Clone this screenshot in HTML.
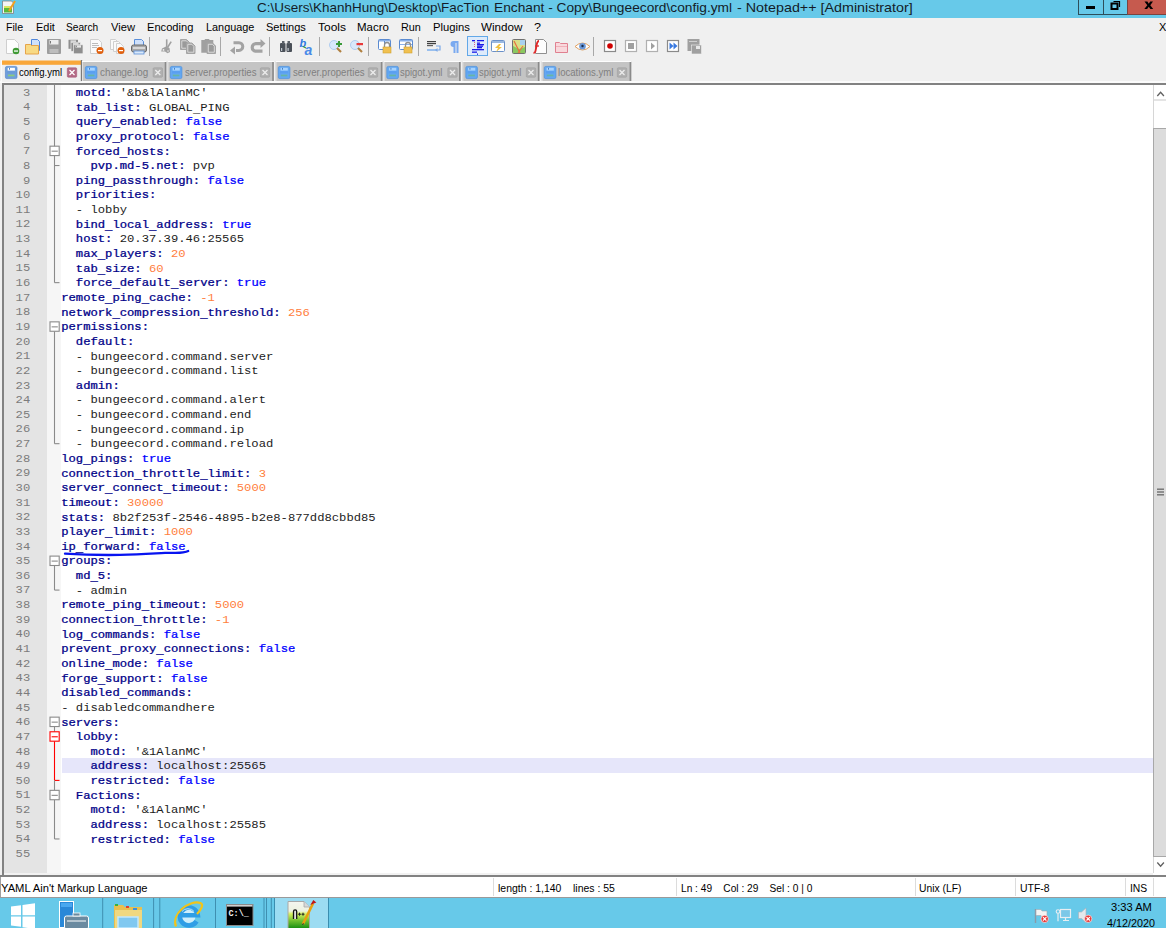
<!DOCTYPE html>
<html><head><meta charset="utf-8"><style>
*{margin:0;padding:0;box-sizing:border-box}
html,body{width:1166px;height:928px;overflow:hidden;background:#f0f0f0;position:relative;font-family:"Liberation Sans",sans-serif}
.a{position:absolute}
.mono{font-family:"Liberation Mono",monospace;font-size:12.2px;line-height:14.64px;white-space:pre;color:#1c1c1c;transform:scaleY(0.82);transform-origin:0 10px}
.k{color:#000088;-webkit-text-stroke:0.3px #000088}
.b{color:#0000ff;-webkit-text-stroke:0.3px #0000ff}
.n{color:#ff8040}
.u{position:relative;top:2.4px}
.ln{color:#7c7c7c;text-align:right;width:40px;transform:scaleY(0.93)!important}
.ui{font-family:"Liberation Sans",sans-serif;white-space:pre}
svg{position:absolute;left:0;top:0}
</style></head>
<body>
<div class="a" style="left:0;top:0;width:1166px;height:17.5px;background:#67c9e9"></div><div class="a" style="left:0;top:81px;width:1166px;height:2px;background:#fbfbfb"></div><div class="a" style="left:2px;top:83px;width:1164px;height:794px;background:#fff;border-top:2px solid #828282;border-left:2px solid #828282;border-bottom:2px solid #828282"></div><div class="a" style="left:4px;top:85px;width:43px;height:788px;background:#e4e4e4"></div><div class="a" style="left:47px;top:85px;width:14px;height:788px;background:#f6f6f6"></div><div class="a" style="left:4px;top:873px;width:1149px;height:2px;background:#f2f2f2"></div><div class="a" style="left:0;top:875px;width:3px;height:2px;background:#828282"></div><div class="a" style="left:61.5px;top:758.24px;width:1092px;height:14.4px;background:#e6e6fa"></div><div class="a" style="left:1153px;top:85px;width:13px;height:788px;background:#fff;border-left:1px solid #d6d6d6"></div><div class="a" style="left:1154px;top:99px;width:12px;height:1.5px;background:#e4e4e4"></div><div class="a" style="left:1153px;top:128.3px;width:13px;height:728.7px;background:#dcdcdc;border-left:1px solid #a8a8a8;border-top:1px solid #a8a8a8;border-bottom:1px solid #a8a8a8"></div><div class="a" style="left:0;top:876.5px;width:1166px;height:20.5px;background:#fff;border-left:1px solid #a0a0a0"></div><div class="a" style="left:492.5px;top:878px;width:1px;height:18px;background:#dcdcdc"></div><div class="a" style="left:676.3px;top:878px;width:1px;height:18px;background:#dcdcdc"></div><div class="a" style="left:915.0px;top:878px;width:1px;height:18px;background:#dcdcdc"></div><div class="a" style="left:1015.3px;top:878px;width:1px;height:18px;background:#dcdcdc"></div><div class="a" style="left:1125.1px;top:878px;width:1px;height:18px;background:#dcdcdc"></div><div class="a" style="left:1153.3px;top:878px;width:1px;height:18px;background:#dcdcdc"></div><div class="a" style="left:0;top:896.5px;width:1166px;height:1px;background:#9a9a9a"></div><div class="a" style="left:0;top:897.5px;width:1166px;height:31px;background:#67c9e9"></div><div class="a" style="left:274px;top:897.5px;width:55px;height:31px;background:#9cdcf2;border-left:1px solid #3a8eb0;border-right:1px solid #3a8eb0"></div>
<svg width="1166" height="928" viewBox="0 0 1166 928"><rect x="1078.5" y="-1" width="25" height="15.5" fill="#67c9e9" stroke="#2e4e5a" stroke-width="1"/><rect x="1103.5" y="-1" width="24" height="15.5" fill="#67c9e9" stroke="#2e4e5a" stroke-width="1"/><rect x="1127.5" y="-1" width="40" height="15.5" fill="#c65a4e" stroke="#7a4440" stroke-width="1"/><rect x="1086" y="6" width="9" height="3" fill="#000"/><rect x="1111.5" y="3.5" width="6" height="5.5" fill="none" stroke="#000" stroke-width="2"/><path d="M1113.5,1.5 h6 v5.5" fill="none" stroke="#000" stroke-width="1.2"/><path d="M1144.5,1.5 H1147.4 L1148.8,3.7 L1150.2,1.5 H1153 L1150.3,5.2 L1153.2,9.1 H1150.4 L1148.8,6.7 L1147.1,9.1 H1144.3 L1147.3,5.2 Z" fill="#000"/><path d="M2.5,1 h9 l2,2 v10.5 h-11 z" fill="#f4f4f4" stroke="#808080" stroke-width=".8"/><rect x="4" y="7" width="8" height="5.5" fill="#5cb83a"/><rect x="4" y="6" width="8" height="2" fill="#d8e860"/><path d="M9,11 l6,-10" stroke="#f0a020" stroke-width="2"/><line x1="149.5" y1="37" x2="149.5" y2="56" stroke="#a8a8a8" stroke-width="1"/><line x1="220.5" y1="37" x2="220.5" y2="56" stroke="#a8a8a8" stroke-width="1"/><line x1="269.5" y1="37" x2="269.5" y2="56" stroke="#a8a8a8" stroke-width="1"/><line x1="319.5" y1="37" x2="319.5" y2="56" stroke="#a8a8a8" stroke-width="1"/><line x1="368.5" y1="37" x2="368.5" y2="56" stroke="#a8a8a8" stroke-width="1"/><line x1="418.5" y1="37" x2="418.5" y2="56" stroke="#a8a8a8" stroke-width="1"/><line x1="593.5" y1="37" x2="593.5" y2="56" stroke="#a8a8a8" stroke-width="1"/><path d="M6.5,39.5 h8 l4,4 v10 h-12 z" fill="#fdfdfd" stroke="#cfcfcf"/><circle cx="16" cy="51" r="3.3" fill="#3f9a34"/><rect x="14" y="50.4" width="4" height="1.3" fill="#fff"/><path d="M31.5,39.5 h6 l2,2 v9 h-8 z" fill="#cfe1fb" stroke="#4f86da"/><path d="M25.5,44.5 h5 l1,1 h7 v8.5 h-13 z" fill="#f8da84" stroke="#e6a44a"/><rect x="47" y="39" width="14" height="15" rx="1" fill="#9d9d9d"/><rect x="49.5" y="40" width="9" height="4.5" fill="#ececec"/><rect x="50" y="41" width="1" height="2.5" fill="#777"/><rect x="49.5" y="49" width="9" height="4" fill="#bdbdbd"/><rect x="68.5" y="39.8" width="9.5" height="9" fill="#8e8e8e"/><rect x="70.5" y="40.3" width="5.5" height="2" fill="#d8d8d8"/><rect x="71" y="42.3" width="9.5" height="9" fill="#8e8e8e" stroke="#eeeeee" stroke-width=".7"/><rect x="73" y="42.8" width="5.5" height="2" fill="#d8d8d8"/><rect x="73.5" y="44.8" width="9.5" height="9" fill="#8e8e8e" stroke="#eeeeee" stroke-width=".7"/><rect x="75.5" y="45.3" width="5.5" height="2.3" fill="#e8e8e8"/><rect x="76" y="45.6" width=".8" height="1.6" fill="#777"/><path d="M90.5,39.5 h8 l3,3 v11 h-11 z" fill="#fafafa" stroke="#cfcfcf"/><rect x="92" y="43" width="6" height="1" fill="#bbb"/><rect x="92" y="45" width="7" height="1" fill="#bbb"/><rect x="92" y="47" width="5" height="1" fill="#bbb"/><circle cx="100" cy="50.5" r="3.5" fill="#e0600e"/><rect x="98" y="50" width="4" height="1.2" fill="#fff"/><path d="M110.5,39.5 h5 l2,2 v8 h-7 z" fill="#fafafa" stroke="#cfcfcf"/><path d="M113.5,41.5 h5 l2,2 v8 h-7 z" fill="#fafafa" stroke="#cfcfcf"/><path d="M116.5,43.5 h4 l3,3 v7 h-7 z" fill="#fafafa" stroke="#cfcfcf"/><circle cx="121" cy="50.5" r="3.5" fill="#e0600e"/><rect x="119" y="50" width="4" height="1.2" fill="#fff"/><path d="M134.5,39.5 h7 l2,2 v4 h-9 z" fill="#cfe1fb" stroke="#5a8ed8"/><rect x="131.5" y="45" width="15" height="7" rx="2" fill="#a8a8a8" stroke="#6a6a6a"/><rect x="133" y="47" width="12" height="2" fill="#d8d8d8"/><rect x="134" y="51" width="10" height="3" fill="#d8e8fa" stroke="#5a8ed8" stroke-width=".8"/><path d="M166.7,39.3 V47.5" stroke="#a0a0a0" stroke-width="1.6"/><path d="M171.2,41.6 L167.5,47.5" stroke="#a0a0a0" stroke-width="1.6"/><path d="M162,48.5 L166,46.5 L169.5,48 L170,52 L167.5,53.3 L165,51.5 L161.2,51.5 Z" fill="#a0a0a0"/><circle cx="163.5" cy="49.9" r=".9" fill="#f0f0f0"/><circle cx="168" cy="51" r=".9" fill="#d0d0d0"/><path d="M180.5,39.5 h6 l3,3 v7 h-9 z" fill="#a4a4a4" stroke="#a4a4a4" stroke-width="1"/><path d="M181.8,40.8 h4.5 l2,2 v5.4 h-6.5 z" fill="#9a9a9a" stroke="#f0f0f0" stroke-width=".7"/><path d="M186.5,43 h5.5 l3,3 v7.5 h-8.5 z" fill="#a4a4a4" stroke="#a4a4a4" stroke-width="1"/><path d="M187.8,44.3 h4 l2,2 v5.9 h-6 z" fill="#9a9a9a" stroke="#f0f0f0" stroke-width=".7"/><path d="M201.3,40 h3 l1,-1 h3.5 l1,1 h3.5 v12.7 h-12 z" fill="#a0a0a0"/><path d="M207,43 h5.5 l3,3 v7.5 h-8.5 z" fill="#a4a4a4" stroke="#a4a4a4" stroke-width="1"/><path d="M208.3,44.3 h4 l2,2 v5.9 h-6 z" fill="#9a9a9a" stroke="#f0f0f0" stroke-width=".7"/><path d="M233.5,42.8 h5.5 a3.8,3.8 0 0 1 0,7.6 h-3" fill="none" stroke="#a3a3a3" stroke-width="3"/><path d="M230,50.4 l5,-4 v8 z" fill="#a3a3a3"/><path d="M261,43.6 h-5 a3.8,3.8 0 0 0 0,7.6 h6.5" fill="none" stroke="#a3a3a3" stroke-width="3.2"/><path d="M265.5,43.6 l-5,-4.5 v9 z" fill="#a3a3a3"/><rect x="280" y="43" width="5.5" height="9" rx="1" fill="#4a5058"/><rect x="286.5" y="43" width="5.5" height="9" rx="1" fill="#4a5058"/><rect x="282" y="41" width="2.5" height="3" fill="#5a6068"/><rect x="287.5" y="41" width="2.5" height="3" fill="#5a6068"/><rect x="281" y="48" width="1.2" height="3" fill="#c0c8d0"/><rect x="287.5" y="48" width="1.2" height="3" fill="#c0c8d0"/><text x="299.5" y="46.5" font-family="Liberation Sans" font-style="italic" font-weight="bold" font-size="11" fill="#2f78e0">b</text><text x="304.5" y="54.5" font-family="Liberation Sans" font-style="italic" font-weight="bold" font-size="14" fill="#4a8ae8">a</text><path d="M303,46.5 l3,1.5" stroke="#3a9a3a" stroke-width="1.2"/><circle cx="334" cy="45" r="4.5" fill="#d8e8fb" stroke="#b0cdf0" stroke-width="1"/><path d="M337,48 l4,4" stroke="#b08040" stroke-width="2.2"/><rect x="336" y="43" width="6" height="2" fill="#3a9a3a"/><rect x="338" y="41" width="2" height="6" fill="#3a9a3a"/><circle cx="355" cy="45" r="4.5" fill="#d8e8fb" stroke="#b0cdf0" stroke-width="1"/><path d="M358,48 l4,4" stroke="#b08040" stroke-width="2.2"/><rect x="356.5" y="43" width="6.5" height="2.2" fill="#e83a3a"/><rect x="378.5" y="39.5" width="12" height="10" rx="1" fill="#fff" stroke="#5a8ad0"/><rect x="379" y="40" width="11" height="1.5" fill="#8ab0e8"/><line x1="384.5" y1="41" x2="384.5" y2="49" stroke="#5a8ad0"/><path d="M384.5,47 v-2 a2.5,2.5 0 0 1 5,0 v2" fill="none" stroke="#909090" stroke-width="1.3"/><rect x="383" y="47" width="8" height="6" fill="#f0c050" stroke="#d0a030" stroke-width=".6"/><rect x="399.5" y="39.5" width="13" height="10" rx="1" fill="#fff" stroke="#5a8ad0"/><rect x="400" y="40" width="12" height="1.5" fill="#8ab0e8"/><line x1="400" y1="44.5" x2="412" y2="44.5" stroke="#8ab0e8"/><path d="M405.5,47 v-2 a2.5,2.5 0 0 1 5,0 v2" fill="none" stroke="#909090" stroke-width="1.3"/><rect x="404" y="47" width="8" height="6" fill="#f0c050" stroke="#d0a030" stroke-width=".6"/><rect x="427" y="41" width="9" height="1.2" fill="#404040"/><rect x="427" y="43" width="9" height="1.2" fill="#404040"/><rect x="427" y="45" width="6" height="1.2" fill="#606060"/><rect x="427" y="49" width="9" height="2" fill="#9ac0ee"/><path d="M436,46 h4 v4 h-3" fill="none" stroke="#7aa8e8" stroke-width="1.2"/><path d="M435,50 l2.5,-2 v4 z" fill="#7aa8e8"/><path d="M453.5,41 h5 v12 h-2 v-10 h-1 v10 h-2 v-6 a3,3 0 0 1 0,-6 z" fill="#7aaaf0"/><rect x="467.5" y="36.5" width="20" height="19" fill="#deebfb" stroke="#62a8e8" stroke-width="1"/><rect x="472" y="40" width="3" height="1.3" fill="#1a1ae8"/><rect x="477" y="40" width="7" height="1.3" fill="#1a1ae8"/><rect x="477" y="42.5" width="3" height="1.3" fill="#1a1ae8"/><rect x="477" y="44" width="7" height="1.3" fill="#1a1ae8"/><rect x="477" y="45.5" width="6" height="1.3" fill="#1a1ae8"/><rect x="477" y="47" width="5" height="1.3" fill="#1a1ae8"/><rect x="472" y="49" width="12" height="1.3" fill="#1a1ae8"/><rect x="472" y="51.5" width="5" height="1.3" fill="#1a1ae8"/><rect x="477" y="53.5" width="1" height="1.3" fill="#1a1ae8"/><line x1="474.5" y1="42" x2="474.5" y2="48" stroke="#e04060" stroke-width=".8" stroke-dasharray="1,1"/><rect x="491.5" y="40.5" width="13" height="11" rx="1" fill="#fff" stroke="#6a90c8"/><rect x="492" y="41" width="12" height="2" fill="#9ab8e0"/><path d="M499,44 l-4,4 h3 l-2,4 l6,-5 h-3 l2,-3 z" fill="#f0c040"/><rect x="512.5" y="39.5" width="13" height="14" rx="1" fill="#d8e088" stroke="#707070"/><path d="M513,46 l6,3 l6,-2 v6 h-12 z" fill="#8ac860"/><path d="M514,41 l6,12 M523,46 l-5,7" stroke="#e87040" stroke-width="1.2"/><rect x="520" y="40" width="5" height="5" fill="#a8d0f0"/><path d="M535.5,39.5 h8 l3,3 v11 h-11 z" fill="#fdfdfd" stroke="#909090"/><path d="M539,41 c-2,0 -2,2 -2.5,5 l-1,5 c-.3,1.5 -1,2 -2,2" fill="none" stroke="#e02828" stroke-width="1.8"/><path d="M535,46 h4" stroke="#e02828" stroke-width="1.3"/><path d="M555.5,42.5 h4 l1,1 h7 v9 h-12 z" fill="#f8d8dc" stroke="#e08090"/><rect x="556" y="46" width="11" height="1" fill="#f0b0b8"/><path d="M575,46.5 q7.5,-7 15,0 q-7.5,7 -15,0 z" fill="#fff" stroke="#e0a060" stroke-width="1"/><circle cx="582.5" cy="46.3" r="3.3" fill="#6a98d8"/><circle cx="582.5" cy="46" r="1.2" fill="#1a2a48"/><rect x="604.5" y="40.5" width="11" height="11" fill="#fff" stroke="#8a8a8a" stroke-width="1.2"/><circle cx="610" cy="46" r="2.8" fill="#d00000"/><rect x="625.5" y="40.5" width="11" height="11" fill="#fff" stroke="#b0b0b0" stroke-width="1.2"/><rect x="628" y="43" width="6" height="6" fill="#a0a0a0"/><rect x="646.5" y="40.5" width="11" height="11" fill="#fff" stroke="#b0b0b0" stroke-width="1.2"/><path d="M651,42.5 l4,3.5 l-4,3.5 z" fill="#a0a0a0"/><rect x="667.5" y="40.5" width="11" height="11" fill="#fff" stroke="#8a8a8a" stroke-width="1.2"/><path d="M669.5,42.5 l4,3.5 l-4,3.5 z M673.5,42.5 l4,3.5 l-4,3.5 z" fill="#3a7ae0"/><rect x="687.5" y="39" width="12" height="12" fill="#a0a0a0"/><rect x="691.5" y="45" width="10" height="9" fill="#a0a0a0" stroke="#f0f0f0" stroke-width=".6"/><rect x="696" y="46" width="4" height="3" fill="#e8e8e8"/><rect x="689" y="41" width="8" height="1" fill="#d0d0d0"/><rect x="1.5" y="60" width="80.5" height="22" fill="#f0f0f0"/><rect x="1.5" y="60.5" width="80.5" height="4.3" fill="#f9a73a"/><line x1="81.5" y1="60" x2="81.5" y2="81" stroke="#7a7a7a" stroke-width="1.4"/><line x1="1.5" y1="60" x2="1.5" y2="82" stroke="#fafafa" stroke-width="1"/><rect x="5.3999999999999995" y="66.39999999999999" width="11.6" height="12.2" rx="1.5" fill="#6f9fdc" stroke="#5a88c8" stroke-width=".7"/><rect x="7.699999999999999" y="67.8" width="7.2" height="2.8" fill="#ffffff"/><rect x="9.1" y="67.89999999999999" width=".9" height="1.8" fill="#3e78c0"/><rect x="7.1" y="71.19999999999999" width="8.2" height="2.3" fill="#6a9ad8"/><rect x="7.8999999999999995" y="74.6" width="6.6" height="1.7" fill="#8ccc7a"/><rect x="67.3" y="67.8" width="9.4" height="9.4" rx="1" fill="#b46a86" stroke="#a85a78" stroke-width=".6"/><path d="M69.5,70.0 l5,5 M74.5,70.0 l-5,5" stroke="#fff" stroke-width="1.3"/><rect x="82" y="61" width="84.5" height="20" fill="#c4c4c4"/><line x1="82" y1="61.5" x2="166.5" y2="61.5" stroke="#fdfdfd" stroke-width="1"/><line x1="165.5" y1="62" x2="165.5" y2="81" stroke="#8a8a8a" stroke-width="1.6"/><line x1="82.5" y1="62" x2="82.5" y2="81" stroke="#e0e0e0" stroke-width="1"/><rect x="85.3" y="66.39999999999999" width="11.6" height="12.2" rx="1.5" fill="#64a8f2" stroke="#4a90e0" stroke-width=".7"/><rect x="87.6" y="67.8" width="7.2" height="2.8" fill="#a8d4ff"/><rect x="89" y="67.89999999999999" width=".9" height="1.8" fill="#3e78c0"/><rect x="87" y="71.19999999999999" width="8.2" height="2.3" fill="#5a9ff0"/><rect x="87.8" y="74.6" width="6.6" height="1.7" fill="#66b6a4"/><rect x="153.10000000000002" y="67.8" width="9.4" height="9.4" rx="1" fill="#b0b0b0" stroke="#a0a0a0" stroke-width=".6"/><path d="M155.3,70.0 l5,5 M160.3,70.0 l-5,5" stroke="#ececec" stroke-width="1.3"/><rect x="167.5" y="61" width="106.5" height="20" fill="#c4c4c4"/><line x1="167.5" y1="61.5" x2="274" y2="61.5" stroke="#fdfdfd" stroke-width="1"/><line x1="273" y1="62" x2="273" y2="81" stroke="#8a8a8a" stroke-width="1.6"/><line x1="168.0" y1="62" x2="168.0" y2="81" stroke="#e0e0e0" stroke-width="1"/><rect x="170.3" y="66.39999999999999" width="11.6" height="12.2" rx="1.5" fill="#64a8f2" stroke="#4a90e0" stroke-width=".7"/><rect x="172.6" y="67.8" width="7.2" height="2.8" fill="#a8d4ff"/><rect x="174" y="67.89999999999999" width=".9" height="1.8" fill="#3e78c0"/><rect x="172" y="71.19999999999999" width="8.2" height="2.3" fill="#5a9ff0"/><rect x="172.8" y="74.6" width="6.6" height="1.7" fill="#66b6a4"/><rect x="260.3" y="67.8" width="9.4" height="9.4" rx="1" fill="#b0b0b0" stroke="#a0a0a0" stroke-width=".6"/><path d="M262.5,70.0 l5,5 M267.5,70.0 l-5,5" stroke="#ececec" stroke-width="1.3"/><rect x="275.5" y="61" width="107.10000000000002" height="20" fill="#c4c4c4"/><line x1="275.5" y1="61.5" x2="382.6" y2="61.5" stroke="#fdfdfd" stroke-width="1"/><line x1="381.6" y1="62" x2="381.6" y2="81" stroke="#8a8a8a" stroke-width="1.6"/><line x1="276.0" y1="62" x2="276.0" y2="81" stroke="#e0e0e0" stroke-width="1"/><rect x="278.3" y="66.39999999999999" width="11.6" height="12.2" rx="1.5" fill="#64a8f2" stroke="#4a90e0" stroke-width=".7"/><rect x="280.6" y="67.8" width="7.2" height="2.8" fill="#a8d4ff"/><rect x="282" y="67.89999999999999" width=".9" height="1.8" fill="#3e78c0"/><rect x="280" y="71.19999999999999" width="8.2" height="2.3" fill="#5a9ff0"/><rect x="280.8" y="74.6" width="6.6" height="1.7" fill="#66b6a4"/><rect x="368.3" y="67.8" width="9.4" height="9.4" rx="1" fill="#b0b0b0" stroke="#a0a0a0" stroke-width=".6"/><path d="M370.5,70.0 l5,5 M375.5,70.0 l-5,5" stroke="#ececec" stroke-width="1.3"/><rect x="383.7" y="61" width="77.10000000000002" height="20" fill="#c4c4c4"/><line x1="383.7" y1="61.5" x2="460.8" y2="61.5" stroke="#fdfdfd" stroke-width="1"/><line x1="459.8" y1="62" x2="459.8" y2="81" stroke="#8a8a8a" stroke-width="1.6"/><line x1="384.2" y1="62" x2="384.2" y2="81" stroke="#e0e0e0" stroke-width="1"/><rect x="386.8" y="66.39999999999999" width="11.6" height="12.2" rx="1.5" fill="#64a8f2" stroke="#4a90e0" stroke-width=".7"/><rect x="389.1" y="67.8" width="7.2" height="2.8" fill="#a8d4ff"/><rect x="390.5" y="67.89999999999999" width=".9" height="1.8" fill="#3e78c0"/><rect x="388.5" y="71.19999999999999" width="8.2" height="2.3" fill="#5a9ff0"/><rect x="389.3" y="74.6" width="6.6" height="1.7" fill="#66b6a4"/><rect x="447.8" y="67.8" width="9.4" height="9.4" rx="1" fill="#b0b0b0" stroke="#a0a0a0" stroke-width=".6"/><path d="M450.0,70.0 l5,5 M455.0,70.0 l-5,5" stroke="#ececec" stroke-width="1.3"/><rect x="462.4" y="61" width="77.20000000000005" height="20" fill="#c4c4c4"/><line x1="462.4" y1="61.5" x2="539.6" y2="61.5" stroke="#fdfdfd" stroke-width="1"/><line x1="538.6" y1="62" x2="538.6" y2="81" stroke="#8a8a8a" stroke-width="1.6"/><line x1="462.9" y1="62" x2="462.9" y2="81" stroke="#e0e0e0" stroke-width="1"/><rect x="465.8" y="66.39999999999999" width="11.6" height="12.2" rx="1.5" fill="#64a8f2" stroke="#4a90e0" stroke-width=".7"/><rect x="468.1" y="67.8" width="7.2" height="2.8" fill="#a8d4ff"/><rect x="469.5" y="67.89999999999999" width=".9" height="1.8" fill="#3e78c0"/><rect x="467.5" y="71.19999999999999" width="8.2" height="2.3" fill="#5a9ff0"/><rect x="468.3" y="74.6" width="6.6" height="1.7" fill="#66b6a4"/><rect x="526.3" y="67.8" width="9.4" height="9.4" rx="1" fill="#b0b0b0" stroke="#a0a0a0" stroke-width=".6"/><path d="M528.5,70.0 l5,5 M533.5,70.0 l-5,5" stroke="#ececec" stroke-width="1.3"/><rect x="541.6" y="61" width="89.79999999999995" height="20" fill="#c4c4c4"/><line x1="541.6" y1="61.5" x2="631.4" y2="61.5" stroke="#fdfdfd" stroke-width="1"/><line x1="630.4" y1="62" x2="630.4" y2="81" stroke="#8a8a8a" stroke-width="1.6"/><line x1="542.1" y1="62" x2="542.1" y2="81" stroke="#e0e0e0" stroke-width="1"/><rect x="544.3" y="66.39999999999999" width="11.6" height="12.2" rx="1.5" fill="#64a8f2" stroke="#4a90e0" stroke-width=".7"/><rect x="546.6" y="67.8" width="7.2" height="2.8" fill="#a8d4ff"/><rect x="548" y="67.89999999999999" width=".9" height="1.8" fill="#3e78c0"/><rect x="546" y="71.19999999999999" width="8.2" height="2.3" fill="#5a9ff0"/><rect x="546.8" y="74.6" width="6.6" height="1.7" fill="#66b6a4"/><rect x="617.3" y="67.8" width="9.4" height="9.4" rx="1" fill="#b0b0b0" stroke="#a0a0a0" stroke-width=".6"/><path d="M619.5,70.0 l5,5 M624.5,70.0 l-5,5" stroke="#ececec" stroke-width="1.3"/><line x1="54.5" y1="85.00" x2="54.5" y2="282.64" stroke="#8a8a8a" stroke-width="1.1"/><line x1="54.5" y1="282.64" x2="59.5" y2="282.64" stroke="#8a8a8a" stroke-width="1.1"/><rect x="50" y="146.18" width="9.2" height="9.4" fill="#fff" stroke="#8a8a8a" stroke-width="1.1"/><line x1="51.6" y1="151.18" x2="57.8" y2="151.18" stroke="#8a8a8a" stroke-width="1.1"/><line x1="54.5" y1="165.52" x2="59.5" y2="165.52" stroke="#8a8a8a" stroke-width="1.1"/><line x1="54.5" y1="331.26" x2="54.5" y2="443.68" stroke="#8a8a8a" stroke-width="1.1"/><rect x="50" y="321.86" width="9.2" height="9.4" fill="#fff" stroke="#8a8a8a" stroke-width="1.1"/><line x1="51.6" y1="326.86" x2="57.8" y2="326.86" stroke="#8a8a8a" stroke-width="1.1"/><line x1="54.5" y1="443.68" x2="59.5" y2="443.68" stroke="#8a8a8a" stroke-width="1.1"/><line x1="54.5" y1="565.50" x2="54.5" y2="590.08" stroke="#8a8a8a" stroke-width="1.1"/><rect x="50" y="556.10" width="9.2" height="9.4" fill="#fff" stroke="#8a8a8a" stroke-width="1.1"/><line x1="51.6" y1="561.10" x2="57.8" y2="561.10" stroke="#8a8a8a" stroke-width="1.1"/><line x1="54.5" y1="590.08" x2="59.5" y2="590.08" stroke="#8a8a8a" stroke-width="1.1"/><line x1="54.5" y1="726.54" x2="54.5" y2="731.78" stroke="#8a8a8a" stroke-width="1.1"/><rect x="50" y="717.14" width="9.2" height="9.4" fill="#fff" stroke="#8a8a8a" stroke-width="1.1"/><line x1="51.6" y1="722.14" x2="57.8" y2="722.14" stroke="#8a8a8a" stroke-width="1.1"/><line x1="54.5" y1="741.18" x2="54.5" y2="780.40" stroke="#ff0000" stroke-width="1.1"/><rect x="50" y="731.78" width="9.2" height="9.4" fill="#fff" stroke="#ff0000" stroke-width="1.1"/><line x1="51.6" y1="736.78" x2="57.8" y2="736.78" stroke="#ff0000" stroke-width="1.1"/><line x1="54.5" y1="780.40" x2="59.5" y2="780.40" stroke="#ff0000" stroke-width="1.1"/><line x1="54.5" y1="780.40" x2="54.5" y2="790.34" stroke="#8a8a8a" stroke-width="1.1"/><line x1="54.5" y1="799.74" x2="54.5" y2="838.96" stroke="#8a8a8a" stroke-width="1.1"/><rect x="50" y="790.34" width="9.2" height="9.4" fill="#fff" stroke="#8a8a8a" stroke-width="1.1"/><line x1="51.6" y1="795.34" x2="57.8" y2="795.34" stroke="#8a8a8a" stroke-width="1.1"/><line x1="54.5" y1="838.96" x2="59.5" y2="838.96" stroke="#8a8a8a" stroke-width="1.1"/><path d="M1157.3,96 l3.3,-3.8 l3.3,3.8" fill="none" stroke="#606060" stroke-width="1.3"/><path d="M1157.3,862.5 l3.3,3.8 l3.3,-3.8" fill="none" stroke="#606060" stroke-width="1.3"/><rect x="1157" y="488.5" width="7" height="1.4" fill="#707070"/><rect x="1157" y="491.3" width="7" height="1.4" fill="#707070"/><rect x="1157" y="494.1" width="7" height="1.4" fill="#707070"/><path d="M65,553.6 C 80,554.6 100,555.2 120,554.9 C 140,554.6 152,553.6 165,552.9 C 172,552.6 178,553.4 183,552.4 C 186,551.9 187.5,551.4 188.2,551" fill="none" stroke="#0814f0" stroke-width="2.3" stroke-linecap="round"/><path d="M11,906.5 l10,-1.3 v10 h-10 z M22.5,905 l12.5,-1.7 v11.9 h-12.5 z M11,916.5 h10 v10.3 l-10,-1.3 z M22.5,916.5 h12.5 v12.5 l-12.5,-1.8 z" fill="#fff"/><line x1="102.7" y1="898" x2="102.7" y2="928" stroke="#3f8fb0" stroke-width="1"/><line x1="153.6" y1="898" x2="153.6" y2="928" stroke="#3f8fb0" stroke-width="1"/><line x1="159.8" y1="898" x2="159.8" y2="928" stroke="#3f8fb0" stroke-width="1"/><line x1="215.5" y1="898" x2="215.5" y2="928" stroke="#3f8fb0" stroke-width="1"/><line x1="264" y1="898" x2="264" y2="928" stroke="#3f8fb0" stroke-width="1"/><line x1="266.5" y1="898" x2="266.5" y2="928" stroke="#3f8fb0" stroke-width="1"/><line x1="271.3" y1="898" x2="271.3" y2="928" stroke="#3f8fb0" stroke-width="1"/><rect x="59.5" y="901.5" width="14" height="26" fill="#2a88d8" stroke="#fff" stroke-width="1"/><rect x="61" y="903" width="11" height="4" fill="#4aa8f0"/><rect x="64.5" y="916" width="24" height="13" rx="2" fill="#6a8aa0" stroke="#fff" stroke-width="1"/><rect x="73" y="913" width="7" height="3" fill="#6a8aa0" stroke="#fff" stroke-width=".8"/><line x1="67" y1="921" x2="86" y2="921" stroke="#fff" stroke-width="1"/><path d="M114,905 h9 l2,2 h17 v21 h-28 z" fill="#e8c050"/><rect x="115" y="904" width="3" height="2" fill="#3ab040"/><rect x="126" y="906" width="3" height="2" fill="#e04030"/><rect x="133" y="908" width="4" height="2" fill="#3a90e0"/><rect x="115" y="910" width="27" height="18" fill="#f0d880"/><rect x="118" y="917" width="20" height="11" fill="#80c8f0" stroke="#c0e8ff" stroke-width="1.5"/><circle cx="188.6" cy="916" r="7" fill="#cdeefc"/><path d="M196.6,921.2 A9,9 0 1 1 197.8,915.2 H180.5" fill="none" stroke="#2f9ee6" stroke-width="4.6"/><path d="M182,911.5 a6.5,4.5 0 0 1 12,0" fill="none" stroke="#bfe6fa" stroke-width="1"/><path d="M176,926.5 C 171,914 189,899.5 200.5,903 C 204,904.5 201,910 197,914" fill="none" stroke="#f2c41a" stroke-width="2.2"/><rect x="226.5" y="904.5" width="26.5" height="21" fill="#000" stroke="#8a8a8a" stroke-width="1"/><rect x="227" y="905" width="25.5" height="1.6" fill="#d0d0d0"/><text x="228.5" y="915.5" font-family="Liberation Mono" font-size="8.5" font-weight="bold" fill="#f0f0f0">C:\_</text><defs><linearGradient id="npg" x1="0" y1="0" x2="0" y2="1"><stop offset="0" stop-color="#f4f6f0"/><stop offset="0.35" stop-color="#eef2e0"/><stop offset="0.45" stop-color="#d8f060"/><stop offset="0.7" stop-color="#70c030"/><stop offset="1" stop-color="#108a10"/></linearGradient></defs><path d="M288,901.5 h16 l5.5,5.5 v22 h-21.5 z" fill="url(#npg)" stroke="#a8a8a8" stroke-width="1"/><path d="M304,901.5 v5.5 h5.5" fill="#d8d8d8" stroke="#a8a8a8" stroke-width=".8"/><path d="M293.5,919 v-7.5 a1.6,1.6 0 0 1 3.2,0 v7.5" fill="#e0e0e0" stroke="#111" stroke-width="1.3"/><path d="M298,914.2 h3 M299.5,912.7 v3 M301.5,914.2 h3 M303,912.7 v3" stroke="#222" stroke-width="1"/><path d="M303,924 L313,903.5" stroke="#e8a010" stroke-width="2.6"/><path d="M312,903.5 l1.5,-2.5 l1.5,1.2 z" fill="#c01818" stroke="#c01818" stroke-width="1.4"/><path d="M302.6,925 l.8,-1.8" stroke="#333" stroke-width="1"/><path d="M1035.5,909 v14" stroke="#8a9aa8" stroke-width="1.4"/><path d="M1036,909.5 h5 l1,1.5 h5 v6 h-5 l-1,-1.5 h-5 z" fill="#f4f4f4" stroke="#a0a8b0" stroke-width=".6"/><circle cx="1044.7" cy="918.9" r="3.7" fill="#e83838" stroke="#fff" stroke-width=".6"/><path d="M1043,917.2 l3.4,3.4 M1046.4,917.2 l-3.4,3.4" stroke="#fff" stroke-width="1.2"/><rect x="1060.5" y="909.5" width="10" height="8" fill="#7cc8e8" stroke="#e8eef2" stroke-width="1.2"/><path d="M1063,920.5 h6 M1065.5,918 v2.5" stroke="#e8eef2" stroke-width="1.2"/><circle cx="1058" cy="911.5" r="1.8" fill="none" stroke="#e8eef2" stroke-width="1.1"/><path d="M1058,913.3 v8" stroke="#e8eef2" stroke-width="1.2"/><path d="M1078.5,912 h3 l4.5,-4 v14.5 l-4.5,-4 h-3 z" fill="#e4e8ec" stroke="#a8b0b8" stroke-width=".6"/><circle cx="1088.2" cy="918.8" r="3.7" fill="#e83838" stroke="#fff" stroke-width=".6"/><path d="M1086.5,917.1 l3.4,3.4 M1089.9,917.1 l-3.4,3.4" stroke="#fff" stroke-width="1.2"/></svg>
<div class="a mono ln" style="left:-9.8px;top:85.70px">3</div><div class="a mono" style="left:61.2px;top:86.00px">  <span class="k">motd:</span> &#x27;&amp;b&amp;lAlanMC&#x27;</div><div class="a mono ln" style="left:-9.8px;top:100.34px">4</div><div class="a mono" style="left:61.2px;top:100.64px">  <span class="k">tab<span class="u">_</span>list:</span> GLOBAL<span class="u">_</span>PING</div><div class="a mono ln" style="left:-9.8px;top:114.98px">5</div><div class="a mono" style="left:61.2px;top:115.28px">  <span class="k">query<span class="u">_</span>enabled:</span> <span class="b">false</span></div><div class="a mono ln" style="left:-9.8px;top:129.62px">6</div><div class="a mono" style="left:61.2px;top:129.92px">  <span class="k">proxy<span class="u">_</span>protocol:</span> <span class="b">false</span></div><div class="a mono ln" style="left:-9.8px;top:144.26px">7</div><div class="a mono" style="left:61.2px;top:144.56px">  <span class="k">forced<span class="u">_</span>hosts:</span></div><div class="a mono ln" style="left:-9.8px;top:158.90px">8</div><div class="a mono" style="left:61.2px;top:159.20px">    <span class="k">pvp.md-5.net:</span> pvp</div><div class="a mono ln" style="left:-9.8px;top:173.54px">9</div><div class="a mono" style="left:61.2px;top:173.84px">  <span class="k">ping<span class="u">_</span>passthrough:</span> <span class="b">false</span></div><div class="a mono ln" style="left:-9.8px;top:188.18px">10</div><div class="a mono" style="left:61.2px;top:188.48px">  <span class="k">priorities:</span></div><div class="a mono ln" style="left:-9.8px;top:202.82px">11</div><div class="a mono" style="left:61.2px;top:203.12px">  - lobby</div><div class="a mono ln" style="left:-9.8px;top:217.46px">12</div><div class="a mono" style="left:61.2px;top:217.76px">  <span class="k">bind<span class="u">_</span>local<span class="u">_</span>address:</span> <span class="b">true</span></div><div class="a mono ln" style="left:-9.8px;top:232.10px">13</div><div class="a mono" style="left:61.2px;top:232.40px">  <span class="k">host:</span> 20.37.39.46:25565</div><div class="a mono ln" style="left:-9.8px;top:246.74px">14</div><div class="a mono" style="left:61.2px;top:247.04px">  <span class="k">max<span class="u">_</span>players:</span> <span class="n">20</span></div><div class="a mono ln" style="left:-9.8px;top:261.38px">15</div><div class="a mono" style="left:61.2px;top:261.68px">  <span class="k">tab<span class="u">_</span>size:</span> <span class="n">60</span></div><div class="a mono ln" style="left:-9.8px;top:276.02px">16</div><div class="a mono" style="left:61.2px;top:276.32px">  <span class="k">force<span class="u">_</span>default<span class="u">_</span>server:</span> <span class="b">true</span></div><div class="a mono ln" style="left:-9.8px;top:290.66px">17</div><div class="a mono" style="left:61.2px;top:290.96px"><span class="k">remote<span class="u">_</span>ping<span class="u">_</span>cache:</span> <span class="n">-1</span></div><div class="a mono ln" style="left:-9.8px;top:305.30px">18</div><div class="a mono" style="left:61.2px;top:305.60px"><span class="k">network<span class="u">_</span>compression<span class="u">_</span>threshold:</span> <span class="n">256</span></div><div class="a mono ln" style="left:-9.8px;top:319.94px">19</div><div class="a mono" style="left:61.2px;top:320.24px"><span class="k">permissions:</span></div><div class="a mono ln" style="left:-9.8px;top:334.58px">20</div><div class="a mono" style="left:61.2px;top:334.88px">  <span class="k">default:</span></div><div class="a mono ln" style="left:-9.8px;top:349.22px">21</div><div class="a mono" style="left:61.2px;top:349.52px">  - bungeecord.command.server</div><div class="a mono ln" style="left:-9.8px;top:363.86px">22</div><div class="a mono" style="left:61.2px;top:364.16px">  - bungeecord.command.list</div><div class="a mono ln" style="left:-9.8px;top:378.50px">23</div><div class="a mono" style="left:61.2px;top:378.80px">  <span class="k">admin:</span></div><div class="a mono ln" style="left:-9.8px;top:393.14px">24</div><div class="a mono" style="left:61.2px;top:393.44px">  - bungeecord.command.alert</div><div class="a mono ln" style="left:-9.8px;top:407.78px">25</div><div class="a mono" style="left:61.2px;top:408.08px">  - bungeecord.command.end</div><div class="a mono ln" style="left:-9.8px;top:422.42px">26</div><div class="a mono" style="left:61.2px;top:422.72px">  - bungeecord.command.ip</div><div class="a mono ln" style="left:-9.8px;top:437.06px">27</div><div class="a mono" style="left:61.2px;top:437.36px">  - bungeecord.command.reload</div><div class="a mono ln" style="left:-9.8px;top:451.70px">28</div><div class="a mono" style="left:61.2px;top:452.00px"><span class="k">log<span class="u">_</span>pings:</span> <span class="b">true</span></div><div class="a mono ln" style="left:-9.8px;top:466.34px">29</div><div class="a mono" style="left:61.2px;top:466.64px"><span class="k">connection<span class="u">_</span>throttle<span class="u">_</span>limit:</span> <span class="n">3</span></div><div class="a mono ln" style="left:-9.8px;top:480.98px">30</div><div class="a mono" style="left:61.2px;top:481.28px"><span class="k">server<span class="u">_</span>connect<span class="u">_</span>timeout:</span> <span class="n">5000</span></div><div class="a mono ln" style="left:-9.8px;top:495.62px">31</div><div class="a mono" style="left:61.2px;top:495.92px"><span class="k">timeout:</span> <span class="n">30000</span></div><div class="a mono ln" style="left:-9.8px;top:510.26px">32</div><div class="a mono" style="left:61.2px;top:510.56px"><span class="k">stats:</span> 8b2f253f-2546-4895-b2e8-877dd8cbbd85</div><div class="a mono ln" style="left:-9.8px;top:524.90px">33</div><div class="a mono" style="left:61.2px;top:525.20px"><span class="k">player<span class="u">_</span>limit:</span> <span class="n">1000</span></div><div class="a mono ln" style="left:-9.8px;top:539.54px">34</div><div class="a mono" style="left:61.2px;top:539.84px"><span class="k">ip<span class="u">_</span>forward:</span> <span class="b">false</span></div><div class="a mono ln" style="left:-9.8px;top:554.18px">35</div><div class="a mono" style="left:61.2px;top:554.48px"><span class="k">groups:</span></div><div class="a mono ln" style="left:-9.8px;top:568.82px">36</div><div class="a mono" style="left:61.2px;top:569.12px">  <span class="k">md<span class="u">_</span>5:</span></div><div class="a mono ln" style="left:-9.8px;top:583.46px">37</div><div class="a mono" style="left:61.2px;top:583.76px">  - admin</div><div class="a mono ln" style="left:-9.8px;top:598.10px">38</div><div class="a mono" style="left:61.2px;top:598.40px"><span class="k">remote<span class="u">_</span>ping<span class="u">_</span>timeout:</span> <span class="n">5000</span></div><div class="a mono ln" style="left:-9.8px;top:612.74px">39</div><div class="a mono" style="left:61.2px;top:613.04px"><span class="k">connection<span class="u">_</span>throttle:</span> <span class="n">-1</span></div><div class="a mono ln" style="left:-9.8px;top:627.38px">40</div><div class="a mono" style="left:61.2px;top:627.68px"><span class="k">log<span class="u">_</span>commands:</span> <span class="b">false</span></div><div class="a mono ln" style="left:-9.8px;top:642.02px">41</div><div class="a mono" style="left:61.2px;top:642.32px"><span class="k">prevent<span class="u">_</span>proxy<span class="u">_</span>connections:</span> <span class="b">false</span></div><div class="a mono ln" style="left:-9.8px;top:656.66px">42</div><div class="a mono" style="left:61.2px;top:656.96px"><span class="k">online<span class="u">_</span>mode:</span> <span class="b">false</span></div><div class="a mono ln" style="left:-9.8px;top:671.30px">43</div><div class="a mono" style="left:61.2px;top:671.60px"><span class="k">forge<span class="u">_</span>support:</span> <span class="b">false</span></div><div class="a mono ln" style="left:-9.8px;top:685.94px">44</div><div class="a mono" style="left:61.2px;top:686.24px"><span class="k">disabled<span class="u">_</span>commands:</span></div><div class="a mono ln" style="left:-9.8px;top:700.58px">45</div><div class="a mono" style="left:61.2px;top:700.88px">- disabledcommandhere</div><div class="a mono ln" style="left:-9.8px;top:715.22px">46</div><div class="a mono" style="left:61.2px;top:715.52px"><span class="k">servers:</span></div><div class="a mono ln" style="left:-9.8px;top:729.86px">47</div><div class="a mono" style="left:61.2px;top:730.16px">  <span class="k">lobby:</span></div><div class="a mono ln" style="left:-9.8px;top:744.50px">48</div><div class="a mono" style="left:61.2px;top:744.80px">    <span class="k">motd:</span> &#x27;&amp;1AlanMC&#x27;</div><div class="a mono ln" style="left:-9.8px;top:759.14px">49</div><div class="a mono" style="left:61.2px;top:759.44px">    <span class="k">address:</span> localhost:25565</div><div class="a mono ln" style="left:-9.8px;top:773.78px">50</div><div class="a mono" style="left:61.2px;top:774.08px">    <span class="k">restricted:</span> <span class="b">false</span></div><div class="a mono ln" style="left:-9.8px;top:788.42px">51</div><div class="a mono" style="left:61.2px;top:788.72px">  <span class="k">Factions:</span></div><div class="a mono ln" style="left:-9.8px;top:803.06px">52</div><div class="a mono" style="left:61.2px;top:803.36px">    <span class="k">motd:</span> &#x27;&amp;1AlanMC&#x27;</div><div class="a mono ln" style="left:-9.8px;top:817.70px">53</div><div class="a mono" style="left:61.2px;top:818.00px">    <span class="k">address:</span> localhost:25585</div><div class="a mono ln" style="left:-9.8px;top:832.34px">54</div><div class="a mono" style="left:61.2px;top:832.64px">    <span class="k">restricted:</span> <span class="b">false</span></div><div class="a mono ln" style="left:-9.8px;top:846.98px">55</div>
<div class="a ui" style="left:257.00px;top:0.89px;font-size:13.6px;line-height:13.6px;color:#141c28;font-weight:400;transform:scaleX(0.9906);transform-origin:0 0">C:\Users\KhanhHung\Desktop\FacTion</div><div class="a ui" style="left:493.50px;top:0.89px;font-size:13.6px;line-height:13.6px;color:#141c28;font-weight:400;transform:scaleX(1.0099);transform-origin:0 0">Enchant - Copy\Bungeecord\config.yml</div><div class="a ui" style="left:737.20px;top:0.89px;font-size:13.6px;line-height:13.6px;color:#141c28;font-weight:400;transform:scaleX(1.0525);transform-origin:0 0">- Notepad++ [Administrator]</div><div class="a ui" style="left:6.00px;top:22.09px;font-size:11px;line-height:11px;color:#000;font-weight:400;transform:scaleX(0.9671);transform-origin:0 0">File</div><div class="a ui" style="left:35.50px;top:22.09px;font-size:11px;line-height:11px;color:#000;font-weight:400;transform:scaleX(0.9951);transform-origin:0 0">Edit</div><div class="a ui" style="left:66.40px;top:22.09px;font-size:11px;line-height:11px;color:#000;font-weight:400;transform:scaleX(0.9241);transform-origin:0 0">Search</div><div class="a ui" style="left:111.00px;top:22.09px;font-size:11px;line-height:11px;color:#000;font-weight:400;transform:scaleX(1.0142);transform-origin:0 0">View</div><div class="a ui" style="left:147.00px;top:22.09px;font-size:11px;line-height:11px;color:#000;font-weight:400;transform:scaleX(1.0112);transform-origin:0 0">Encoding</div><div class="a ui" style="left:205.50px;top:22.09px;font-size:11px;line-height:11px;color:#000;font-weight:400;transform:scaleX(0.9881);transform-origin:0 0">Language</div><div class="a ui" style="left:265.50px;top:22.09px;font-size:11px;line-height:11px;color:#000;font-weight:400;transform:scaleX(1.0033);transform-origin:0 0">Settings</div><div class="a ui" style="left:317.50px;top:22.09px;font-size:11px;line-height:11px;color:#000;font-weight:400;transform:scaleX(1.0884);transform-origin:0 0">Tools</div><div class="a ui" style="left:356.50px;top:22.09px;font-size:11px;line-height:11px;color:#000;font-weight:400;transform:scaleX(1.0444);transform-origin:0 0">Macro</div><div class="a ui" style="left:400.50px;top:22.09px;font-size:11px;line-height:11px;color:#000;font-weight:400;transform:scaleX(0.9841);transform-origin:0 0">Run</div><div class="a ui" style="left:432.50px;top:22.09px;font-size:11px;line-height:11px;color:#000;font-weight:400;transform:scaleX(1.0228);transform-origin:0 0">Plugins</div><div class="a ui" style="left:481.00px;top:22.09px;font-size:11px;line-height:11px;color:#000;font-weight:400;transform:scaleX(1.0590);transform-origin:0 0">Window</div><div class="a ui" style="left:533.50px;top:22.09px;font-size:11px;line-height:11px;color:#000;font-weight:400;transform:scaleX(1.1439);transform-origin:0 0">?</div><div class="a ui" style="left:1159.00px;top:22.09px;font-size:11px;line-height:11px;color:#000;font-weight:400;transform:scaleX(1.0000);transform-origin:0 0">X</div><div class="a ui" style="left:19.20px;top:67.49px;font-size:11px;line-height:11px;color:#000;font-weight:400;transform:scaleX(0.8695);transform-origin:0 0">config.yml</div><div class="a ui" style="left:99.50px;top:67.49px;font-size:11px;line-height:11px;color:#808080;font-weight:400;transform:scaleX(0.8952);transform-origin:0 0">change.log</div><div class="a ui" style="left:184.50px;top:67.49px;font-size:11px;line-height:11px;color:#808080;font-weight:400;transform:scaleX(0.8722);transform-origin:0 0">server.properties</div><div class="a ui" style="left:292.50px;top:67.49px;font-size:11px;line-height:11px;color:#808080;font-weight:400;transform:scaleX(0.8735);transform-origin:0 0">server.properties</div><div class="a ui" style="left:400.10px;top:67.49px;font-size:11px;line-height:11px;color:#808080;font-weight:400;transform:scaleX(0.8571);transform-origin:0 0">spigot.yml</div><div class="a ui" style="left:479.10px;top:67.49px;font-size:11px;line-height:11px;color:#808080;font-weight:400;transform:scaleX(0.8571);transform-origin:0 0">spigot.yml</div><div class="a ui" style="left:557.50px;top:67.49px;font-size:11px;line-height:11px;color:#808080;font-weight:400;transform:scaleX(0.8708);transform-origin:0 0">locations.yml</div><div class="a ui" style="left:1.30px;top:882.99px;font-size:11px;line-height:11px;color:#000;font-weight:400;transform:scaleX(1.0182);transform-origin:0 0">YAML Ain&#x27;t Markup Language</div><div class="a ui" style="left:497.50px;top:882.99px;font-size:11px;line-height:11px;color:#000;font-weight:400;transform:scaleX(0.9505);transform-origin:0 0">length : 1,140    lines : 55</div><div class="a ui" style="left:680.50px;top:882.99px;font-size:11px;line-height:11px;color:#000;font-weight:400;transform:scaleX(0.9229);transform-origin:0 0">Ln : 49    Col : 29    Sel : 0 | 0</div><div class="a ui" style="left:918.90px;top:882.99px;font-size:11px;line-height:11px;color:#000;font-weight:400;transform:scaleX(0.9379);transform-origin:0 0">Unix (LF)</div><div class="a ui" style="left:1019.80px;top:882.99px;font-size:11px;line-height:11px;color:#000;font-weight:400;transform:scaleX(0.9474);transform-origin:0 0">UTF-8</div><div class="a ui" style="left:1129.50px;top:882.99px;font-size:11px;line-height:11px;color:#000;font-weight:400;transform:scaleX(0.9391);transform-origin:0 0">INS</div><div class="a ui" style="left:1110.50px;top:902.19px;font-size:11px;line-height:11px;color:#000;font-weight:400;transform:scaleX(1.0132);transform-origin:0 0">3:33 AM</div><div class="a ui" style="left:1107.00px;top:917.69px;font-size:11px;line-height:11px;color:#000;font-weight:400;transform:scaleX(0.9780);transform-origin:0 0">4/12/2020</div>
</body></html>
